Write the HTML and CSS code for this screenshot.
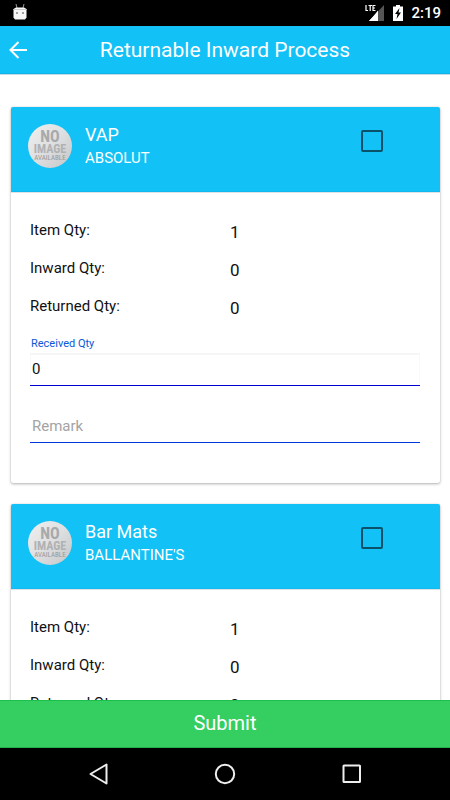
FILE: index.html
```html
<!DOCTYPE html>
<html lang="en">
<head>
<meta charset="utf-8">
<meta name="viewport" content="width=device-width, initial-scale=1">
<title>Returnable Inward Process</title>
<link rel="stylesheet" href="styles.css">
</head>
<body>
<div class="status">
  <svg class="debug" width="14" height="16" viewBox="0 0 14 16" aria-hidden="true">
    <path d="M3 0l1 4M11 0l-1 4" stroke="#999" stroke-width="1" fill="none"/>
    <path d="M0.500 5L3 3.500h8L13.500 5v8.500L12 15.500H2L0.500 13.500z" fill="#f8f8f8"/>
    <path d="M0.500 5.500h13" stroke="#ccc" stroke-width="1"/>
    <circle cx="4" cy="9" r="0.800" fill="#333"/><circle cx="10" cy="9" r="0.800" fill="#333"/>
  </svg>
  <div class="indicators">
    <svg width="20" height="18" viewBox="0 0 20 18" aria-hidden="true">
      <path d="M19 1v16H4z" fill="#555"/>
      <path d="M13 7v10H4z" fill="#fff"/>
      <path d="M0 0h12v8H0z" fill="#000"/>
      <path d="M13 6.500v10.500H4l5-5z" fill="#fff"/>
      <path d="M1 1v5.500h2M3.500 1.500h3.500M5.200 1.500v5.500M10.500 1.500H8v5h2.500M8 4h2" stroke="#fff" stroke-width="1.200" fill="none"/>
    </svg>
    <svg width="10" height="16" viewBox="0 0 10 16" aria-hidden="true">
      <path d="M3 0h4v1.500h3V16H0V1.500h3z" fill="#fff"/>
      <path d="M6.500 3L2 9h2.500l-1 5L8 7.500H5.500z" fill="#000"/>
    </svg>
    <span>2:19</span>
  </div>
</div>
<header class="appbar">
  <button class="back" type="button" aria-label="Back">
    <svg width="18" height="18" viewBox="0 0 18 18"><path d="M9.500 1L1.500 9l8 8M1.500 9H18" fill="none" stroke="#fff" stroke-width="2"/></svg>
  </button>
  <h1>Returnable Inward Process</h1>
</header>
<main class="list">
  <article class="card">
    <div class="card-head">
      <svg class="avatar" viewBox="0 0 44 44" role="img" aria-label="No image available">
        <defs><linearGradient id="silver" x1="0" y1="0" x2="1" y2="1"><stop offset="0" stop-color="#f0f0f1"/><stop offset="0.500" stop-color="#dedfe0"/><stop offset="1" stop-color="#c4c5c7"/></linearGradient></defs>
        <circle cx="22" cy="22" r="22" fill="url(#silver)"/>
        <text class="a1" x="22" y="18">NO</text><text class="a2" x="22" y="29">IMAGE</text><text class="a3" x="22" y="36">AVAILABLE</text>
      </svg>
      <div class="names"><h2>VAP</h2><p>ABSOLUT</p></div>
      <input class="pick" type="checkbox" aria-label="Select VAP">
    </div>
    <div class="card-body">
      <dl>
        <div class="row"><dt>Item Qty:</dt><dd>1</dd></div>
        <div class="row"><dt>Inward Qty:</dt><dd>0</dd></div>
        <div class="row"><dt>Returned Qty:</dt><dd>0</dd></div>
      </dl>
      <label class="caption" for="received1">Received Qty</label>
      <input class="field boxed" id="received1" type="text" inputmode="numeric" value="0">
      <input class="field remark" type="text" placeholder="Remark" aria-label="Remark">
    </div>
  </article>
  <article class="card">
    <div class="card-head">
      <svg class="avatar" viewBox="0 0 44 44" role="img" aria-label="No image available">
        <circle cx="22" cy="22" r="22" fill="url(#silver)"/>
        <text class="a1" x="22" y="18">NO</text><text class="a2" x="22" y="29">IMAGE</text><text class="a3" x="22" y="36">AVAILABLE</text>
      </svg>
      <div class="names"><h2>Bar Mats</h2><p>BALLANTINE'S</p></div>
      <input class="pick" type="checkbox" aria-label="Select Bar Mats">
    </div>
    <div class="card-body">
      <dl>
        <div class="row"><dt>Item Qty:</dt><dd>1</dd></div>
        <div class="row"><dt>Inward Qty:</dt><dd>0</dd></div>
        <div class="row"><dt>Returned Qty:</dt><dd>0</dd></div>
      </dl>
    </div>
  </article>
</main>
<button class="submit" type="button">Submit</button>
<nav class="sysnav" aria-label="System">
  <button type="button" aria-label="Back"><svg width="22" height="22" viewBox="0 0 22 22"><path d="M19.500 1.500v19L3.500 11z"/></svg></button>
  <button type="button" aria-label="Home"><svg width="22" height="22" viewBox="0 0 22 22"><circle cx="11" cy="11" r="9.200"/></svg></button>
  <button type="button" aria-label="Recent apps"><svg width="22" height="22" viewBox="0 0 22 22"><rect x="2.500" y="2.500" width="16.500" height="16.500" rx="0.500"/></svg></button>
</nav>
</body>
</html>
```
FILE: styles.css
```css
* { box-sizing: border-box; }
body {
  margin: 0;
  height: 100vh;
  display: flex;
  flex-direction: column;
  background: #fff;
  color: #111;
  font-family: Roboto, "Liberation Sans", sans-serif;
}
h1, h2, p, dl, dd { margin: 0; font-weight: 400; }
button { border: 0; padding: 0; background: none; color: #fff; font-family: inherit; }
svg { display: block; }

.status {
  flex: none;
  height: 26px;
  padding: 0 9px 0 13px;
  display: flex;
  align-items: center;
  justify-content: space-between;
  background: #000;
  color: #fff;
}
.indicators { display: flex; align-items: center; gap: 8px; font-size: 15px; font-weight: 500; line-height: 26px; }
.debug { margin-bottom: 2px; }

.appbar {
  flex: none;
  height: 48px;
  display: grid;
  grid-template-columns: 36px 1fr 36px;
  align-items: center;
  background: #12c1f5;
  border-bottom: 1px solid #10b4ea;
  box-shadow: 0 1px 0 #c3d9e5;
  color: #fff;
  z-index: 1;
}
.back { justify-self: center; }
h1 { font-size: 21px; line-height: 24px; text-align: center; }

.list {
  flex: 1;
  min-height: 0;
  overflow: hidden;
  padding: 33px 10px 0 11px;
}
.card {
  margin-bottom: 21px;
  border-radius: 2px;
  background: #fff;
  box-shadow: 0 1px 3px rgba(0, 0, 0, 0.3), 0 0 1px rgba(0, 0, 0, 0.2);
}
.card-head {
  height: 85px;
  padding: 17px 57px 0 17px;
  display: flex;
  align-items: flex-start;
  background: #12c1f5;
  border-bottom: 1px solid #12b9ee;
  box-shadow: 0 1px 0 #dde3e6;
  border-radius: 2px 2px 0 0;
  color: #fff;
}
.avatar { width: 44px; height: 44px; }
.avatar text { font-family: "Liberation Sans Narrow", "Roboto Condensed", sans-serif; font-weight: 700; text-anchor: middle; fill: #a8a9ab; }
.avatar .a1 { font-size: 16px; }
.avatar .a2 { font-size: 12px; fill: #b0b1b3; }
.avatar .a3 { font-size: 7px; font-weight: 400; fill: #98999b; }
.names { flex: 1; padding-left: 13px; }
.names h2 { font-size: 18px; line-height: 22px; }
.names p { font-size: 15px; line-height: 24px; }
.pick {
  appearance: none;
  width: 22px;
  height: 22px;
  margin: 6px 0 0;
  border: 2px solid #0a5269;
  border-radius: 2px;
}

.card-body { padding: 19px 20px 40px 19px; }
.row { height: 38px; display: grid; grid-template-columns: 200px 1fr; align-items: center; }
dt { font-size: 15px; }
dd { font-size: 17px; padding-top: 4px; }
.caption { display: block; padding: 11px 1px 1px; color: #0b57d8; font-size: 11px; line-height: 16px; }
.field {
  display: block;
  width: 100%;
  height: 33px;
  margin: 0;
  padding: 0 2px;
  border: 0;
  outline: 0;
  background: none;
  color: #111;
  font-family: inherit;
  font-size: 15px;
}
.boxed { border: 0 solid #0000d0; border-bottom-width: 1px; box-shadow: inset 0 2px 0 #f6f6f6, inset 1px 0 0 #fafafa, inset -1px 0 0 #fafafa; }
.remark { margin-top: 24px; border-bottom: 1px solid #0038e0; }
.field::placeholder { color: #a3a3a3; opacity: 1; }

.submit { flex: none; height: 48px; padding-bottom: 2px; background: #35ce60; border-top: 1px solid #1bbf4c; border-bottom: 1px solid #22b14c; font-size: 20px; }
.sysnav { flex: none; height: 52px; padding: 0 34px; display: grid; grid-template-columns: repeat(3, 1fr); place-items: center; background: #000; }
.sysnav svg { fill: none; stroke: #eee; stroke-width: 2; stroke-linejoin: round; }
```
